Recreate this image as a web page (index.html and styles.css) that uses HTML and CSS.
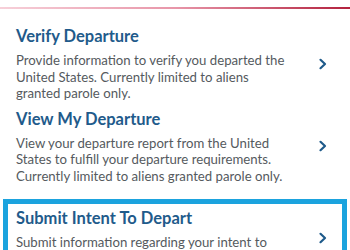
FILE: index.html
```html
<!DOCTYPE html>
<html>
<head>
<meta charset="utf-8">
<link rel="stylesheet" href="styles.css">
</head>
<body>
<div class="topline"></div>
<ul class="list">
  <li class="item">
    <div class="text">
      <h2 class="title">Verify Departure</h2>
      <p class="desc">Provide information to verify you departed the United States. Currently limited to aliens granted parole only.</p>
    </div>
    <svg class="chev" width="10" height="12" viewBox="0 0 10 12"><path d="M2.5 1.8 L7 6 L2.5 10.2" fill="none" stroke="#1e5a8a" stroke-width="2.2" stroke-linecap="round" stroke-linejoin="round"/></svg>
  </li>
  <li class="item">
    <div class="text">
      <h2 class="title">View My Departure</h2>
      <p class="desc">View your departure report from the United States to fulfill your departure requirements. Currently limited to aliens granted parole only.</p>
    </div>
    <svg class="chev" width="10" height="12" viewBox="0 0 10 12"><path d="M2.5 1.8 L7 6 L2.5 10.2" fill="none" stroke="#1e5a8a" stroke-width="2.2" stroke-linecap="round" stroke-linejoin="round"/></svg>
  </li>
  <li class="item selected">
    <div class="text">
      <h2 class="title">Submit Intent To Depart</h2>
      <p class="desc">Submit information regarding your intent to depart the United States.</p>
    </div>
    <svg class="chev" width="10" height="12" viewBox="0 0 10 12"><path d="M2.5 1.8 L7 6 L2.5 10.2" fill="none" stroke="#1e5a8a" stroke-width="2.2" stroke-linecap="round" stroke-linejoin="round"/></svg>
  </li>
</ul>
</body>
</html>
```
FILE: styles.css
```css
html, body {
  margin: 0;
  padding: 0;
  background: #ffffff;
  overflow: hidden;
}
body {
  font-family: Lato, "Open Sans", sans-serif;
  width: 350px;
  height: 250px;
}
.topline {
  margin-top: 7px;
  height: 2px;
  background: linear-gradient(to right, #f7d0d9 0%, #e896a9 50%, #b3223e 100%);
}
.list {
  list-style: none;
  margin: 0;
  padding: 17px 0 0 0;
}
.item {
  display: flex;
  align-items: center;
  padding: 0 22px 0 16px;
  margin-bottom: 7px;
}
.text {
  flex: 1;
}
.title {
  margin: 0 0 6px 0;
  font-size: 16.5px;
  line-height: 20px;
  font-weight: 700;
  color: #1f5b8b;
}
.desc {
  margin: 0;
  font-size: 13.2px;
  line-height: 16.5px;
  color: #555a5e;
  max-width: 275px;
}
.chev {
  flex: none;
  margin-left: 16px;
}
.selected {
  margin: 15px 3px 0 3px;
  border: 5px solid #1ba3de;
  padding: 4px 14px 10px 8px;
}
```
